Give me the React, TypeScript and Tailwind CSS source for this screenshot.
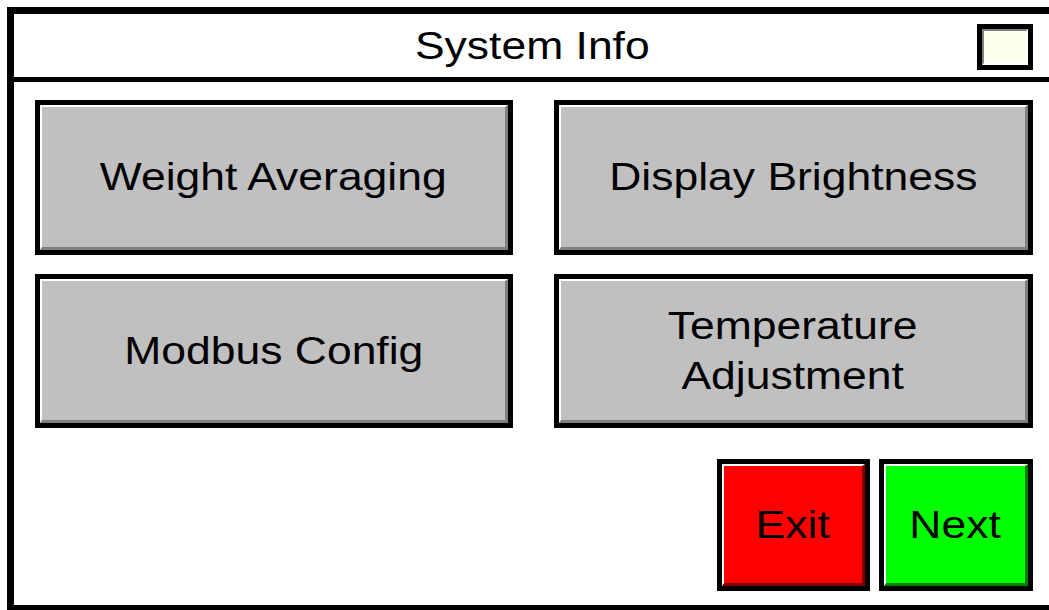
const FONT = { fontFamily: '"Liberation Sans", Arial, sans-serif' };

type Face = "gray" | "red" | "green";

function Label({ children }: { children: React.ReactNode }) {
  return (
    <span className="inline-block scale-x-[1.17] text-[38px] leading-[50px] text-black text-center">
      {children}
    </span>
  );
}

function PanelButton({ face = "gray", className = "", children }: { face?: Face; className?: string; children: React.ReactNode }) {
  const faces: Record<Face, string> = {
    gray: "bg-[#c0c0c0] border-b-[#808080] border-r-[#808080]",
    red: "bg-[#ff0000] border-b-[#800000] border-r-[#800000]",
    green: "bg-[#00ff00] border-b-[#008000] border-r-[#008000]",
  };
  return (
    <button className={`border-[5px] border-black p-0 ${className}`}>
      <div
        className={`w-full h-full flex items-center justify-center border-t-2 border-l-2 border-b-[3px] border-r-[3px] border-t-white border-l-white ${faces[face]}`}
      >
        <Label>{children}</Label>
      </div>
    </button>
  );
}

export default function App() {
  return (
    <div className="w-[1049px] h-[610px] overflow-hidden bg-white pt-[7px] pl-[7px]" style={FONT}>
      {/* o quadro continua além da borda direita da tela */}
      <div className="w-[1047px] h-[605px] border-[7px] border-r-0 border-black flex flex-col">
        <div className="relative h-[68px] border-b-[5px] border-black flex items-center justify-center shrink-0">
          <span className="pr-[4px]">
            <Label>System Info</Label>
          </span>
          <div className="absolute right-[21px] top-[10px] w-[56px] h-[46px] border-[5px] border-black">
            <div className="w-full h-full bg-[#fffff0] border-2 border-t-[#808080] border-l-[#808080] border-b-white border-r-white" />
          </div>
        </div>

        <div className="pl-[21px] pt-[18px] flex flex-col">
          <div className="grid grid-cols-[478px_479px] grid-rows-[155px_154px] gap-x-[41px] gap-y-[19px]">
            <PanelButton>Weight Averaging</PanelButton>
            <PanelButton>Display Brightness</PanelButton>
            <PanelButton>Modbus Config</PanelButton>
            <PanelButton>
              Temperature
              <br />
              Adjustment
            </PanelButton>
          </div>

          <div className="mt-[31px] w-[998px] flex justify-end gap-[9px]">
            <PanelButton face="red" className="w-[153px] h-[132px]">Exit</PanelButton>
            <PanelButton face="green" className="w-[154px] h-[132px]">Next</PanelButton>
          </div>
        </div>
      </div>
    </div>
  );
}
